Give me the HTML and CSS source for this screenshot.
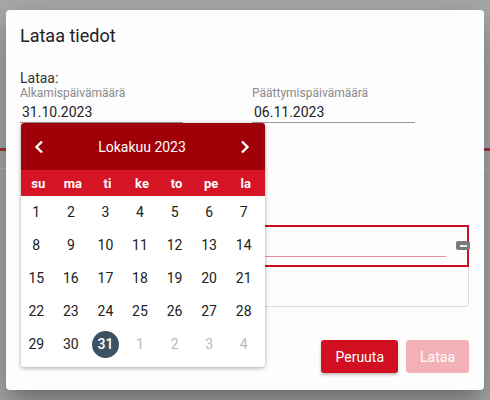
FILE: index.html
```html
<!DOCTYPE html>
<html lang="fi">

<head>
    <meta charset="UTF-8">
    <title>Lataa tiedot</title>
    <link rel="stylesheet" href="styles.css">
</head>

<body>
    <!-- Download dialog -->
    <div class="dialog">
        <h2 class="dialog-title">Lataa tiedot</h2>
        <div class="form-label">Lataa:</div>
        <div class="date-row">
            <div class="date-field">
                <div class="date-label">Alkamispäivämäärä</div>
                <div class="date-input">31.10.2023</div>
            </div>
            <div class="date-field">
                <div class="date-label">Päättymispäivämäärä</div>
                <div class="date-input">06.11.2023</div>
            </div>
        </div>
        <div class="text-box">
            <div class="text-box-active">
                <div class="text-box-line"></div>
            </div>
        </div>
        <div class="actions">
            <button class="btn btn-cancel">Peruuta</button>
            <button class="btn btn-submit" disabled>Lataa</button>
        </div>

        <span class="handle"></span>

        <!-- Datepicker popup -->
        <div class="calendar">
            <div class="cal-header">
                <svg class="cal-arrow" width="10" height="14" viewBox="0 0 10 14"><polyline points="8,1.5 2.5,7 8,12.5" fill="none" stroke="#fff" stroke-width="2.4"/></svg>
                <span class="cal-title">Lokakuu 2023</span>
                <svg class="cal-arrow" width="10" height="14" viewBox="0 0 10 14"><polyline points="2,1.5 7.5,7 2,12.5" fill="none" stroke="#fff" stroke-width="2.4"/></svg>
            </div>
            <div class="cal-weekdays">
                <span>su</span><span>ma</span><span>ti</span><span>ke</span><span>to</span><span>pe</span><span>la</span>
            </div>
            <div class="cal-days">
                <span>1</span><span>2</span><span>3</span><span>4</span><span>5</span><span>6</span><span>7</span>
                <span>8</span><span>9</span><span>10</span><span>11</span><span>12</span><span>13</span><span>14</span>
                <span>15</span><span>16</span><span>17</span><span>18</span><span>19</span><span>20</span><span>21</span>
                <span>22</span><span>23</span><span>24</span><span>25</span><span>26</span><span>27</span><span>28</span>
                <span>29</span><span>30</span><span class="selected"><b>31</b></span><span class="other">1</span><span class="other">2</span><span class="other">3</span><span class="other">4</span>
            </div>
        </div>
    </div>
</body>

</html>
```

FILE: styles.css
```css
html {
    margin: 0;
}

body {
    margin: 0;
    width: 490px;
    height: 400px;
    overflow: hidden;
    box-sizing: border-box;
    padding: 10px 6px;
    font-family: Roboto, 'Liberation Sans', sans-serif;
    color: #212121;
    background:
        linear-gradient(to bottom, transparent 148px, #9e3a3a 148px, #9e3a3a 151px, transparent 151px),
        linear-gradient(to bottom, transparent 168px, #b8b8b8 168px, #b8b8b8 169px, transparent 169px),
        #aaaaaa;
}

.dialog {
    position: relative;
    width: 478px;
    height: 380px;
    box-sizing: border-box;
    padding: 14px 15px 17px 14px;
    background-color: #fdfdfd;
    border-radius: 4px;
    box-shadow: 0 11px 15px -7px rgba(0, 0, 0, 0.2), 0 24px 38px 3px rgba(0, 0, 0, 0.14), 0 9px 46px 8px rgba(0, 0, 0, 0.12);
}

.dialog-title {
    margin: 0;
    font-size: 18px;
    font-weight: 400;
    line-height: 24px;
    color: #212121;
}

.form-label {
    margin-top: 23px;
    font-size: 14px;
    line-height: 15px;
    color: #333;
}

.date-row {
    display: flex;
    gap: 69px;
}

.date-field {
    width: 163px;
}

.date-label {
    font-size: 12px;
    line-height: 14px;
    color: #8a8a8a;
}

.date-input {
    margin-top: 3px;
    padding-left: 2px;
    font-size: 14px;
    line-height: 19px;
    color: #222;
    border-bottom: 1px solid #9a9a9a;
}

.text-box {
    margin: 102px 0 0 12px;
    height: 82px;
    box-sizing: border-box;
    border: 1px solid #dcdcdc;
    border-radius: 4px;
}

.text-box-active {
    margin: -1px -1px 0 -1px;
    height: 42px;
    box-sizing: border-box;
    padding: 29px 21px 0 0;
    border: 2px solid #c8102a;
}

.text-box-line {
    height: 1px;
    background-color: #e8909a;
}

.actions {
    margin-top: 33px;
    display: flex;
    justify-content: flex-end;
    gap: 8px;
}

.btn {
    height: 33px;
    padding: 0 14px;
    border: none;
    border-radius: 3px;
    font-family: Roboto, 'Liberation Sans', sans-serif;
    font-size: 14px;
    font-weight: 400;
    color: #fff;
}

.btn-cancel {
    background-color: #d20f20;
    box-shadow: 0 2px 3px rgba(0, 0, 0, 0.25);
}

.btn-submit {
    background-color: #f2b1b6;
}

.handle {
    position: absolute;
    left: 450px;
    top: 231px;
    width: 14px;
    height: 9px;
    border-radius: 2px;
    background-color: #7a7a7a;
    display: flex;
    justify-content: center;
    align-items: center;
}

.handle::after {
    content: '';
    width: 7px;
    height: 2px;
    background-color: #eee;
}

/* datepicker */

.calendar {
    position: absolute;
    left: 15px;
    top: 113px;
    width: 244px;
    padding-bottom: 6px;
    background-color: #fff;
    border-radius: 3px;
    box-shadow: 0 1px 4px rgba(0, 0, 0, 0.35);
    overflow: hidden;
}

.cal-header {
    height: 47px;
    display: flex;
    align-items: center;
    justify-content: space-between;
    padding: 0 15px 0 13px;
    background-color: #a00008;
    color: #fff;
}

.cal-title {
    font-size: 14px;
    font-weight: 400;
}

.cal-weekdays,
.cal-days {
    display: grid;
    grid-template-columns: repeat(7, 1fr);
    text-align: center;
}

.cal-weekdays {
    height: 26px;
    padding-right: 2px;
    align-items: center;
    background-color: #d51426;
    color: #fff;
    font-size: 13px;
    font-weight: 700;
}

.cal-days {
    margin: 0 4px 0 -2px;
    grid-auto-rows: 33px;
    font-size: 14px;
    color: #212121;
}

.cal-days span {
    display: flex;
    align-items: center;
    justify-content: center;
    margin-top: -1px;
}

.cal-days .other {
    color: #bababa;
}

.cal-days .selected b {
    width: 27px;
    height: 27px;
    border-radius: 50%;
    background-color: #3c5262;
    color: #fff;
    font-weight: 500;
    display: flex;
    align-items: center;
    justify-content: center;
}
```
